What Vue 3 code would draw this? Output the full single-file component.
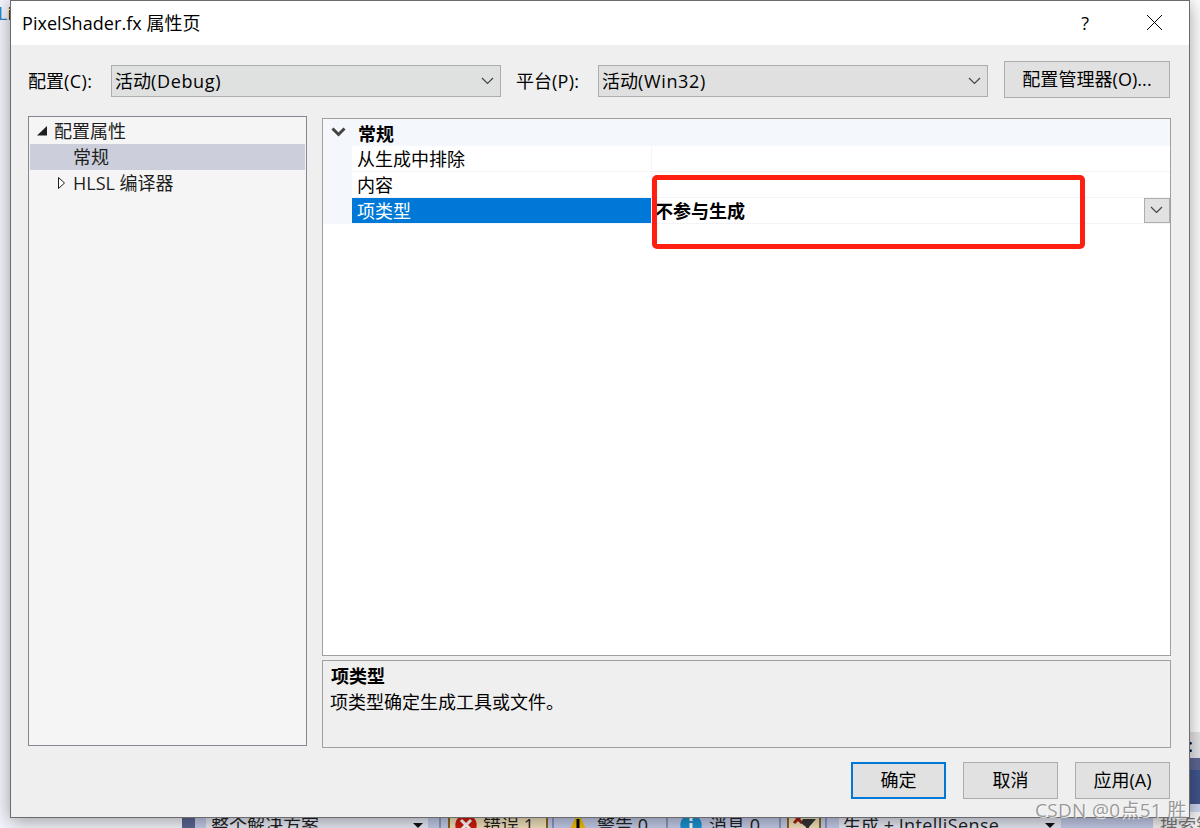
<template>
  <div class="screen">
    <div class="backdrop">
      <div class="editor">
        <span class="editor-text"><i>L</i>i</span>
        <div class="top-line"></div>
        <div class="side">
          <div class="side-white"></div>
          <div class="side-gray"><b>:</b></div>
          <div class="side-slate"></div>
          <div class="side-navy"></div>
          <div class="side-light"></div>
        </div>
      </div>
      <div class="error-bar">
        <div class="divider"></div>
        <div class="scope">
          <span>整个解决方案</span>
          <i class="caret"></i>
        </div>
        <i class="sep first"></i>
        <div class="count active">
          <svg width="22" height="22" viewBox="0 0 22 22">
            <circle cx="11" cy="11" r="10.7" fill="#d01c0d" />
            <path d="M6 6l10 10M16 6L6 16" stroke="#fff" stroke-width="3" />
          </svg>
          <span>错误 1</span>
        </div>
        <i class="sep"></i>
        <div class="count warn">
          <svg width="20" height="20" viewBox="0 0 20 20">
            <path d="M8 1h4l8 18H0z" fill="#f2bd00" />
            <path d="M10 4v9M10 15v3" stroke="#000" stroke-width="3" />
          </svg>
          <span>警告 0</span>
        </div>
        <i class="sep"></i>
        <div class="count info">
          <svg width="22" height="22" viewBox="0 0 22 22">
            <circle cx="11" cy="11" r="10.7" fill="#1b93d2" />
            <path d="M11 4v3M11 9v9" stroke="#fff" stroke-width="3" />
          </svg>
          <span>消息 0</span>
        </div>
        <i class="sep"></i>
        <div class="filter">
          <svg width="28" height="20" viewBox="0 0 28 20">
            <path d="M3 0l8 8M11 0L3 8" stroke="#a3200f" stroke-width="3" />
            <path d="M12 4h13l-7 8v6h-3v-6l-5-4z" fill="#353535" />
          </svg>
        </div>
        <i class="sep"></i>
        <div class="build">
          <span>生成 + <em>IntelliSense</em></span>
          <i class="caret"></i>
        </div>
        <div class="search">搜索错误列表</div>
      </div>
    </div>

    <div class="dialog">
      <header class="title-bar">
        <div class="title"><span class="file">PixelShader.fx</span> 属性页</div>
        <div class="help">?</div>
        <svg class="close" width="17" height="17" viewBox="0 0 17 17">
          <path d="M1 1l15 15M16 1L1 16" stroke="#000" stroke-width="1" />
        </svg>
      </header>

      <div class="config-row">
        <label class="config-label">配置<span>(C):</span></label>
        <div class="select tinted">
          <span>活动<em>(Debug)</em></span>
          <svg width="13" height="8" viewBox="0 0 13 8">
            <path d="M1 1l5.5 5.5L12 1" />
          </svg>
        </div>
        <label class="platform-label">平台<span>(P):</span></label>
        <div class="select">
          <span>活动<em>(Win32)</em></span>
          <svg width="13" height="8" viewBox="0 0 13 8">
            <path d="M1 1l5.5 5.5L12 1" />
          </svg>
        </div>
        <button class="btn manager">配置管理器(O)...</button>
      </div>

      <div class="content">
        <ul class="tree">
          <li class="root">
            <svg width="10" height="10" viewBox="0 0 10 10">
              <path d="M10 0v9.5H0z" fill="#1e1e1e" />
            </svg>
            <span>配置属性</span>
          </li>
          <li class="leaf selected"><span>常规</span></li>
          <li class="branch">
            <svg width="9" height="14" viewBox="0 0 9 14">
              <path d="M1.5 1.5v11L7.5 7z" fill="#fff" stroke="#1e1e1e" />
            </svg>
            <span>HLSL 编译器</span>
          </li>
        </ul>

        <div class="right">
          <div class="grid">
            <div class="category">
              <svg width="15" height="10" viewBox="0 0 15 10">
                <path d="M1.5 1.5l6 6 6-6" />
              </svg>
              <span>常规</span>
            </div>
            <div
              v-for="row in rows"
              :key="row.name"
              class="row"
              :class="{ current: row.current }"
            >
              <div class="name">{{ row.name }}</div>
              <div class="value">
                <span>{{ row.value }}</span>
                <div v-if="row.current" class="drop">
                  <svg width="13" height="8" viewBox="0 0 13 8">
                    <path d="M1 1l5.5 5.5L12 1" />
                  </svg>
                </div>
              </div>
            </div>
            <div class="highlight"></div>
          </div>
          <div class="description">
            <strong>项类型</strong>
            <p>项类型确定生成工具或文件。</p>
          </div>
        </div>
      </div>

      <footer class="actions">
        <button class="btn default">确定</button>
        <button class="btn">取消</button>
        <button class="btn">应用(A)</button>
      </footer>
    </div>
    <div class="watermark">CSDN @0点51 胜</div>
  </div>
</template>

<script setup>
const rows = [
  { name: "从生成中排除", value: "" },
  { name: "内容", value: "" },
  { name: "项类型", value: "不参与生成", current: true },
];
</script>

<style>
body {
  margin: 0;
  overflow: hidden;
}
</style>

<style scoped>
* {
  box-sizing: border-box;
}

.screen {
  position: relative;
  width: 1200px;
  height: 828px;
  overflow: hidden;
  font-family: "Open Sans", "Noto Sans CJK SC", sans-serif;
  font-size: 18px;
  line-height: 26px;
  color: #000;
  white-space: nowrap;
}

.backdrop {
  height: 828px;
  background: #f5f6fd;
  display: flex;
  flex-direction: column;
}

.editor {
  height: 812px;
  display: flex;
}

.editor-text {
  width: 182px;
  margin-left: -2px;
  color: #222;
}

.editor-text i {
  font-style: normal;
  color: #2b83c8;
}

.top-line {
  width: 14px;
  height: 1px;
  margin-left: 2px;
  background: #2a3050;
}

.side {
  width: 12px;
  margin-left: auto;
}

.side-white {
  height: 732px;
  background: #fff;
}

.side-gray {
  height: 26px;
  background: #e6e6ea;
}

.side-gray b {
  font-weight: 600;
}

.side-slate {
  height: 12px;
  background: #5c6794;
}

.side-navy {
  height: 34px;
  background: #40568d;
}

.side-light {
  height: 8px;
  background: #ccd5ef;
}

.error-bar {
  height: 26px;
  flex: none;
  display: flex;
  align-items: center;
  padding-left: 182px;
  background: linear-gradient(90deg, #f5f6fd 182px, #c4cce9 182px);
  color: #222;
}

.divider {
  width: 13px;
  height: 26px;
  background: #5c6794;
}

.scope,
.build {
  display: flex;
  align-items: center;
  justify-content: space-between;
  height: 26px;
  background: #e7eaf5;
}

.scope {
  width: 222px;
  margin-left: 11px;
  padding: 0 5px 0 5px;
}

.caret {
  border: 5px solid transparent;
  border-top-color: #111;
  border-bottom: 0;
  margin-top: 1px;
}

.sep {
  width: 2px;
  height: 26px;
  flex: none;
  background: #8a98c2;
}

.sep.first {
  margin: 0 7px 0 11px;
}

.count {
  display: flex;
  align-items: center;
  height: 26px;
  width: 112px;
  flex: none;
}

.count.active {
  width: 100px;
  margin-right: 4px;
  padding-left: 5px;
  gap: 6px;
  border: 2px solid #8a661b;
  background: #f3e2bd;
}

.count.warn {
  padding-left: 14px;
  gap: 9px;
}

.count.info {
  width: 111px;
  padding-left: 12px;
  gap: 7px;
}

.filter {
  width: 34px;
  height: 26px;
  margin: 0 4px 0 6px;
  padding: 1px 0 0 2px;
  flex: none;
  border: 2px solid #8a661b;
  background: #f3e2bd;
}

.build {
  width: 222px;
  margin-left: 12px;
  padding: 0 6px 0 4px;
}

.build em {
  font-style: normal;
  letter-spacing: 0.4px;
}

.search {
  width: 47px;
  height: 26px;
  margin-left: auto;
  padding-left: 7px;
  background: #f4f4f6;
  color: #777;
  overflow: hidden;
}

.dialog {
  position: absolute;
  left: 10px;
  top: 0;
  width: 1180px;
  height: 818px;
  display: flex;
  flex-direction: column;
  border: 1px solid #6b6b6d;
  background: #efefef;
  box-shadow: 0 3px 18px rgba(0, 0, 0, 0.38);
}

.title-bar {
  display: flex;
  align-items: center;
  height: 44px;
  padding: 0 26px 1px 11px;
  background: #fff;
}

.title {
  flex: 1;
}

.file {
  letter-spacing: 0.05px;
}

.help {
  margin-right: 57px;
}

.config-row {
  display: flex;
  align-items: center;
  height: 72px;
  padding: 0 19px 0 17px;
}

.config-label {
  width: 83px;
}

.config-label span {
  letter-spacing: 0.4px;
}

.platform-label {
  width: 97px;
  padding-left: 15px;
}

.platform-label span {
  letter-spacing: 0.3px;
}

.select {
  display: flex;
  align-items: center;
  justify-content: space-between;
  width: 390px;
  height: 32px;
  padding: 0 6px 0 3px;
  border: 1px solid #abadb1;
  background: #e0e0e0;
}

.select em {
  font-style: normal;
  letter-spacing: 0.65px;
}

.select.tinted {
  background: #dfe1e0;
}

.select svg path,
.drop svg path {
  fill: none;
  stroke: #444;
  stroke-width: 1.2;
}

.btn {
  width: 95px;
  height: 37px;
  padding: 0;
  border: 1px solid #adadad;
  background: #e1e1e1;
  color: #000;
  font: inherit;
}

.btn.manager {
  width: 166px;
  margin: -3px 0 0 16px;
  letter-spacing: 0.05px;
  padding-bottom: 1px;
}

.content {
  display: flex;
  gap: 15px;
  padding: 0 18px 0 17px;
}

.tree {
  width: 279px;
  height: 630px;
  margin: -1px 0 0;
  padding: 1px;
  list-style: none;
  border: 1px solid #828790;
  background: #f5f5f5;
  color: #1e1e1e;
}

.tree li {
  display: flex;
  align-items: center;
  height: 26px;
}

.root {
  gap: 7px;
  padding-left: 7px;
}

.leaf {
  padding-left: 43px;
}

.branch {
  gap: 7px;
  padding-left: 27px;
}

.selected {
  background: #cccedb;
}

.right {
  width: 849px;
  padding-top: 1px;
}

.grid {
  position: relative;
  height: 538px;
  border: 1px solid #a0a0a0;
  background: #fff;
}

.category {
  display: flex;
  align-items: center;
  gap: 12px;
  height: 27px;
  padding: 2px 0 0 8px;
  background: #f4f7fc;
  font-weight: bold;
}

.category svg {
  margin-top: -4px;
}

.category svg path {
  fill: none;
  stroke: #444;
  stroke-width: 3;
}

.row {
  display: flex;
  height: 26px;
  padding-left: 29px;
  background: linear-gradient(90deg, #f4f7fc 29px, #fff 29px);
}

.name {
  width: 300px;
  padding-left: 5px;
  border-right: 1px solid #f3f4f6;
  border-bottom: 1px solid #f3f4f6;
}

.value {
  flex: 1;
  display: flex;
  align-items: center;
  justify-content: space-between;
  padding-left: 3px;
  border-bottom: 1px solid #f3f4f6;
  font-weight: bold;
}

.current .name {
  background: #0078d7;
  background-clip: padding-box;
  color: #fff;
}

.drop {
  display: flex;
  align-items: center;
  justify-content: center;
  width: 26px;
  height: 25px;
  padding: 0 2px 2px 0;
  border: 1px solid #adadad;
  background: #e1e1e1;
}

/* red frame marking the edited value */
.highlight {
  position: absolute;
  left: 329px;
  top: 56px;
  width: 433px;
  height: 74px;
  border: 5px solid #ff1f11;
  border-radius: 5px;
}

.description {
  height: 88px;
  margin-top: 4px;
  padding: 3px 8px 0;
  border: 1px solid #a0a0a0;
}

.description strong {
  display: block;
  line-height: 25px;
}

.description p {
  margin: 0 0 0 -1px;
}

.actions {
  display: flex;
  justify-content: flex-end;
  gap: 17px;
  padding: 14px 19px 0 0;
}

.actions .btn {
  padding-bottom: 1px;
}

.btn.default {
  border: 2px solid #0078d7;
}

.watermark {
  position: absolute;
  left: 1035px;
  top: 797px;
  color: rgba(130, 130, 130, 0.8);
  font-size: 19px;
  letter-spacing: 0.3px;
  text-shadow: 1px 1px 0 rgba(255, 255, 255, 0.7);
}
</style>
